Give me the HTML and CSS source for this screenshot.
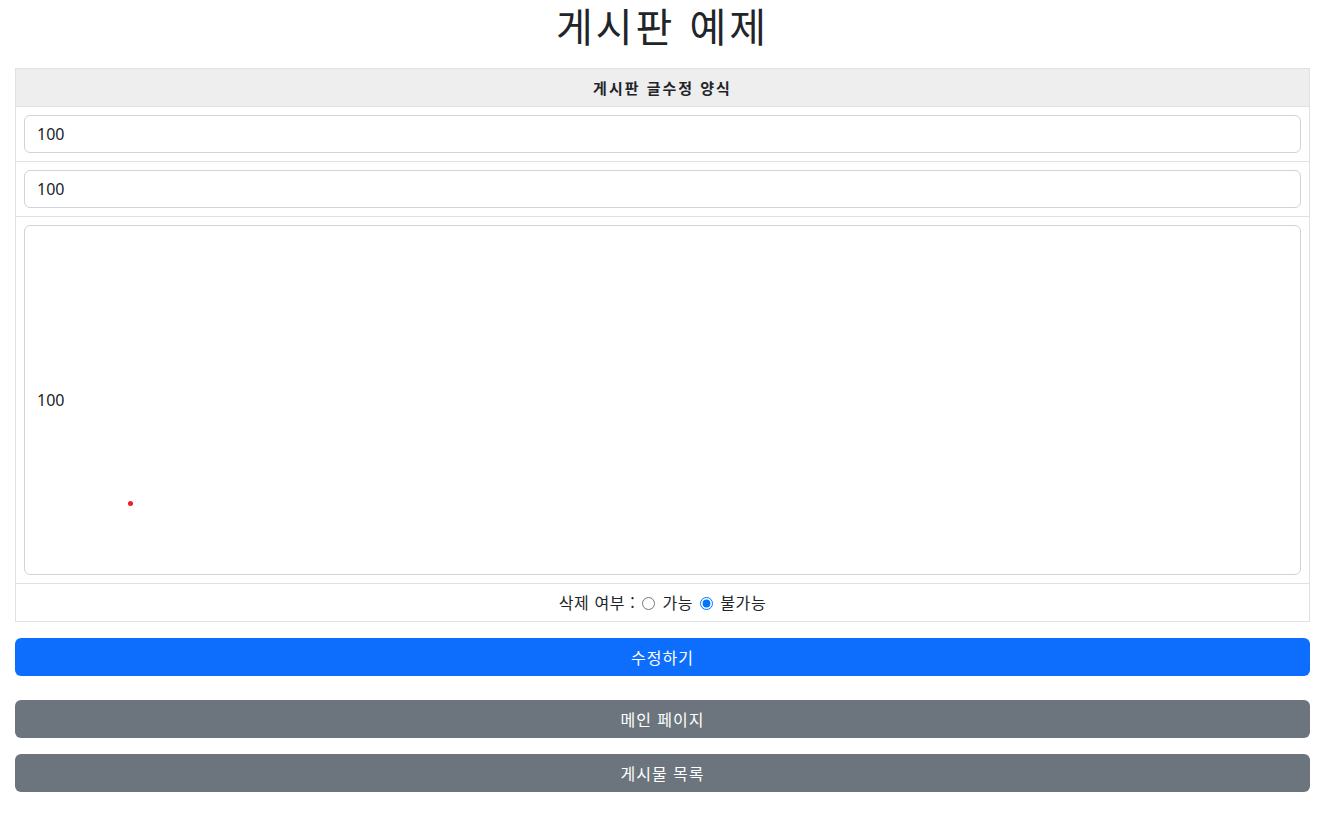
FILE: index.html
```html
<!DOCTYPE html>
<html lang="ko">
<head>
<meta charset="UTF-8">
<meta name="viewport" content="width=device-width, initial-scale=1.0">
<title>게시판 예제</title>
<link rel="stylesheet" href="styles.css">
</head>
<body>
    <div class="page">
        <h1>게시판 예제</h1>
        <form class="edit-form" onsubmit="return false">
            <table class="board-table">
                <thead>
                    <tr><th>게시판 글수정 양식</th></tr>
                </thead>
                <tbody>
                    <tr><td><input type="text" class="form-control" value="100"></td></tr>
                    <tr><td><input type="text" class="form-control" value="100"></td></tr>
                    <tr><td><input type="text" class="form-control content-box" value="100"></td></tr>
                    <tr>
                        <td class="center-cell">
                            삭제 여부 :
                            <label class="radio-label"><input type="radio" name="deletable" value="1"> 가능</label>
                            <label class="radio-label"><input type="radio" name="deletable" value="0" checked> 불가능</label>
                        </td>
                    </tr>
                </tbody>
            </table>
            <button type="submit" class="btn btn-primary">수정하기</button>
        </form>
        <button type="button" class="btn btn-secondary btn-main">메인 페이지</button>
        <button type="button" class="btn btn-secondary btn-list">게시물 목록</button>
    </div>
    <span class="red-dot"></span>
</body>
</html>
```

FILE: styles.css
```css
body {
font-family: "Noto Sans CJK KR", "Noto Sans", sans-serif;
font-size: 16px;
color: #212529;
background-color: #ffffff;
margin: 0;
padding: 0;
}

.page {
padding: 0 12px 0 15px;
}

h1 {
margin: 0 0 12px;
padding: 0;
font-family: "Liberation Sans", "Noto Sans CJK KR", sans-serif;
font-size: 40px;
font-weight: 400;
line-height: 56px;
letter-spacing: 3px;
text-align: center;
}

.board-table {
width: 100%;
border-collapse: collapse;
margin: 0;
}

.board-table th,
.board-table td {
border: 1px solid #dee2e6;
padding: 8px;
}

.board-table th {
background-color: #eeeeee;
font-size: 15px;
font-weight: bold;
height: 21px;
line-height: 21px;
letter-spacing: 2px;
text-align: center;
}

.form-control {
display: block;
box-sizing: border-box;
width: 100%;
height: 38px;
padding: 6px 12px;
font-family: "Noto Sans", "Noto Sans CJK KR", sans-serif;
font-size: 16px;
color: #212529;
border: 1px solid #ced4da;
border-radius: 6px;
outline: none;
}

.content-box {
height: 350px;
}

.center-cell {
text-align: center;
height: 21px;
line-height: 21px;
letter-spacing: 0.6px;
}

.radio-label input {
margin: 0 2px 0 2px;
vertical-align: -1px;
width: 13px;
height: 13px;
}

.btn {
display: block;
width: 100%;
height: 38px;
border: none;
border-radius: 6px;
font-family: "Noto Sans CJK KR", sans-serif;
font-size: 16px;
letter-spacing: 1px;
color: #ffffff;
cursor: pointer;
}

.btn-primary {
background-color: #0d6efd;
margin-top: 16px;
}

.btn-secondary {
background-color: #6c757d;
}

.btn-main {
margin-top: 24px;
}

.btn-list {
margin-top: 16px;
}

.red-dot {
position: absolute;
left: 128px;
top: 501px;
width: 5px;
height: 5px;
border-radius: 50%;
background-color: #ee1c24;
}
```
